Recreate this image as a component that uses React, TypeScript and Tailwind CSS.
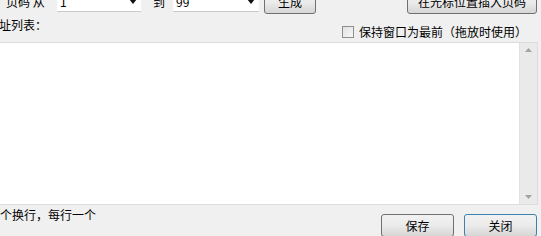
import React from "react";

const font = { fontFamily: '"Noto Sans CJK SC", "Noto Sans", sans-serif' };

function Arrow() {
  return (
    <svg width="8" height="5" viewBox="0 0 8 5" className="shrink-0">
      <path d="M0 0 L8 0 L4 5 Z" fill="#111" />
    </svg>
  );
}

function Combo({ value, w }: { value: string; w: string }) {
  return (
    <div className={`${w} h-[20px] bg-white border-b border-[#c9c9c9] flex items-center justify-between pl-[3px] pr-[4px]`}>
      <span className="text-[12px] text-black leading-none">{value}</span>
      <Arrow />
    </div>
  );
}

function Btn({ children, w, focus }: { children: React.ReactNode; w: string; focus?: boolean }) {
  return (
    <div
      className={`${w} h-[23px] rounded-[3px] border ${focus ? "border-[#3c7fb1]" : "border-[#707070]"} bg-gradient-to-b from-[#f2f2f2] via-[#ebebeb] to-[#d6d6d6] flex items-center justify-center text-[12px] text-black leading-none`}
    >
      {children}
    </div>
  );
}

export default function App() {
  return (
    <div className="w-[541px] h-[236px] bg-[#f0f0f0] overflow-hidden text-black select-none" style={font}>
      <div className="flex items-center h-[20px] mt-[-8px]">
        <span className="ml-[6px] w-[51px] text-[12px] leading-none whitespace-nowrap">页码 从</span>
        <Combo value="1" w="w-[84px]" />
        <span className="ml-[12px] w-[20px] text-[12px] leading-none">到</span>
        <Combo value="99" w="w-[86px]" />
        <div className="ml-[5px]"><Btn w="w-[52px]">生成</Btn></div>
        <div className="ml-auto mr-[4px]"><Btn w="w-[130px]">在光标位置插入页码</Btn></div>
      </div>
      <div className="flex items-center h-[30px] mt-[-2px]">
        <span className="text-[12px] leading-none ml-[-1px]">址列表：</span>
        <div className="ml-auto mr-[14px] flex items-center mt-[14px]">
          <div className="w-[12px] h-[12px] border border-[#8e8f8f] bg-gradient-to-br from-[#e0e0e0] to-[#f8f8f8] mr-[5px]" />
          <span className="text-[12px] leading-none whitespace-nowrap">保持窗口为最前（拖放时使用）</span>
        </div>
      </div>
      <div className="mt-[2px] mr-[3px] h-[163px] bg-white border-t border-r border-b border-[#dcdcdc] flex justify-end">
        <div className="w-[18px] h-full bg-[#eaeaea] border-l border-[#e2e2e2] flex flex-col items-center justify-between py-[5px]">
          <svg width="7" height="4" viewBox="0 0 7 4"><path d="M0 4 L7 4 L3.5 0 Z" fill="#a3a3a3" /></svg>
          <svg width="7" height="4" viewBox="0 0 7 4"><path d="M0 0 L7 0 L3.5 4 Z" fill="#a3a3a3" /></svg>
        </div>
      </div>
      <div className="flex h-[31px]">
        <span className="text-[12px] leading-none mt-[4px] whitespace-nowrap">个换行，每行一个</span>
        <div className="ml-auto flex gap-[10px] mt-[9px] mr-[4px]">
          <Btn w="w-[73px]">保存</Btn>
          <Btn w="w-[73px]" focus>关闭</Btn>
        </div>
      </div>
    </div>
  );
}
